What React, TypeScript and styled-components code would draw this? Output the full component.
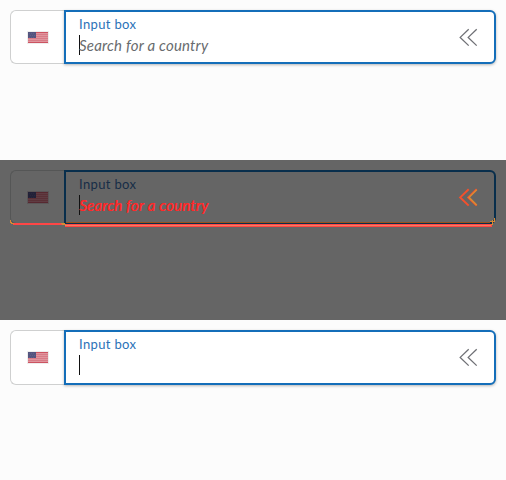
import React from "react";
import styled, { createGlobalStyle } from "styled-components";

const GlobalStyle = createGlobalStyle`
  *, *::before, *::after { box-sizing: border-box; }
  body { margin: 0; background: #fcfcfc; font-family: Lato, "Open Sans", sans-serif; }
`;

type Tone = { $diff?: boolean };

const Page = styled.main`
  width: 506px;
  height: 480px;
  overflow: hidden;
`;

const Panel = styled.section<Tone>`
  height: 160px;
  padding: 10px;
  background: ${p => (p.$diff ? "#656565" : "#fcfcfc")};
`;

const Field = styled.div<{ $height: number }>`
  display: flex;
  height: ${p => p.$height}px;
  position: relative;
`;

const Country = styled.div<Tone>`
  display: flex;
  align-items: center;
  justify-content: center;
  width: 54px;
  padding-left: 1px;
  border: 1px solid ${p => (p.$diff ? "#555656" : "#cfd0d0")};
  border-right: 0;
  border-radius: 6px 0 0 6px;
  background: ${p => (p.$diff ? "#656565" : "#fff")};
`;

const InputBox = styled.div<Tone>`
  display: flex;
  justify-content: space-between;
  flex: 1;
  padding: 4px 16px 0 13px;
  border: 2px solid ${p => (p.$diff ? "#082e4c" : "#146eb9")};
  border-radius: 0 6px 6px 0;
  background: ${p => (p.$diff ? "#656565" : "#fff")};
  box-shadow: ${p => (p.$diff ? "none" : "0 1px 3px rgba(0, 0, 0, 0.28)")};
`;

const TextArea = styled.div`
  display: flex;
  flex-direction: column;
`;

const Label = styled.label<Tone>`
  height: 19px;
  font-size: 13px;
  line-height: 16px;
  letter-spacing: 0.35px;
  color: ${p => (p.$diff ? "#172d47" : "#2b72b8")};
`;

const Entry = styled.div<Tone>`
  height: 20px;
  border-left: 1px solid #111;
  font-size: 15px;
  font-style: italic;
  line-height: 21px;
  letter-spacing: 0.2px;
  text-indent: -1px;
  white-space: nowrap;
  color: ${p => (p.$diff ? "#ff2929" : "#686b6e")};
  text-shadow: ${p => (p.$diff ? "0.4px 0 #ff2929" : "none")};
`;

const Toggle = styled.svg`
  width: 19px;
  height: 18px;
  margin-top: 12px;
  overflow: visible;
`;

const ChangedEdges = styled.svg`
  position: absolute;
  left: 0;
  bottom: -4px;
  width: 486px;
  height: 12px;
`;

const FlagIcon = styled.svg`
  width: 22px;
  height: 13px;
  flex: none;
`;

function Flag({ diff }: { diff?: boolean }) {
  return (
    <FlagIcon viewBox="0 0 22 13" shapeRendering="crispEdges">
      <path fill={diff ? "#5b5759" : "#eeeeee"} d="M0 0h22v13H0z" />
      <path fill={diff ? "#5a3036" : "#d87b86"} d="M1 1h20v11H1z" />
      <path stroke={diff ? "#5f3c43" : "#e0959e"} d="M1 2.5h20M1 4.5h20M1 6.5h20M1 8.5h20M1 10.5h20" />
      <path stroke={diff ? "#572830" : "#cc5361"} d="M1 1.5h20M1 11.5h20" />
      <path fill={diff ? "#222138" : "#54547f"} d="M1 1h8v6H1z" />
      <path stroke={diff ? "#28273d" : "#606089"} strokeDasharray="1 1" d="M2 2.5h6M3 4.5h6M2 6.5h6" />
    </FlagIcon>
  );
}

function CountryField({ diff, height, placeholder }: { diff?: boolean; height: number; placeholder?: string }) {
  const arrows = "M9.7 1.2 1.2 9.4l8.5 8.2M17.7 1.2 9.2 9.4l8.5 8.2";
  return (
    <Field $height={height}>
      <Country $diff={diff}><Flag diff={diff} /></Country>
      <InputBox $diff={diff}>
        <TextArea>
          <Label $diff={diff}>Input box</Label>
          <Entry $diff={diff}>{placeholder}</Entry>
        </TextArea>
        <Toggle viewBox="0 0 19 18" fill="none">
          <path d={arrows} stroke={diff ? "#f4502d" : "#6f7075"} strokeWidth={diff ? 2 : 1.3} />
          {diff && <path d="M17.7 1.8 10 9.4l7.7 7.7" stroke="#d98a32" strokeWidth="1.5" />}
        </Toggle>
      </InputBox>
      {diff && (
        <ChangedEdges viewBox="0 0 486 12" fill="none" shapeRendering="crispEdges">
          <path d="M3 8h51" stroke="#ff4646" strokeWidth="2" />
          <path d="M.5 4v2h1v1h2v1" stroke="#d98a32" />
          <path d="M56 7.5h426" stroke="#082e4c" />
          <path d="M56 6.5h424" stroke="#94541f" />
          <path d="M55 9.5h427" stroke="#ff4646" strokeWidth="3" />
          <path d="M55 9.5h426" stroke="#f08060" />
          <path d="M51 7.5h4M52 8.5h4" stroke="#d98a32" />
          <path d="M480 5.5h2v-2M484.5 2v3h-2v3h-2" stroke="#d98a32" />
        </ChangedEdges>
      )}
    </Field>
  );
}

export default function App() {
  return (
    <Page>
      <GlobalStyle />
      <Panel><CountryField height={54} placeholder="Search for a country" /></Panel>
      <Panel $diff><CountryField diff height={54} placeholder="Search for a country" /></Panel>
      <Panel><CountryField height={55} /></Panel>
    </Page>
  );
}
